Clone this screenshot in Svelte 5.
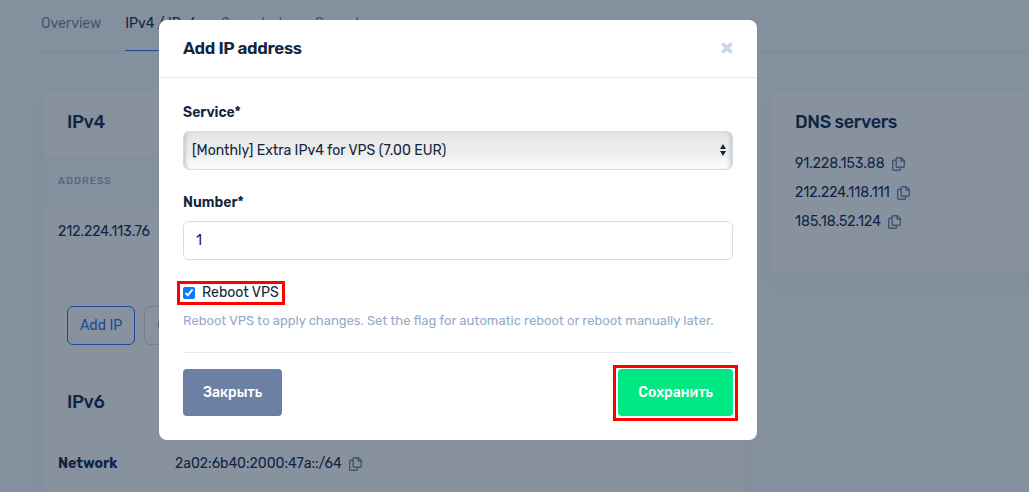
<script lang="ts">
  const servers = ['91.228.153.88', '212.224.118.111', '185.18.52.124'];
  let service = $state('extra');
  let count = $state('1');
  let reboot = $state(true);
</script>

{#snippet copyIcon()}
  <svg width="13" height="14" viewBox="0 0 13 14" fill="none" stroke="currentColor" stroke-width="1.4" stroke-linejoin="round">
    <path d="M5.3 .7H9.4L12.3 3.6V9.2a1.100 1.100 0 0 1-1.100 1.100H5.300a1.100 1.100 0 0 1-1.100-1.100V1.800A1.100 1.100 0 0 1 5.300 .7z" />
    <path d="M9 .9V4H12.100" />
    <path d="M4 3.200H1.800A1.100 1.100 0 0 0 .7 4.300v7.900a1.100 1.100 0 0 0 1.100 1.100h5.600a1.100 1.100 0 0 0 1.100-1.100v-1.700" />
  </svg>
{/snippet}

<div class="page">
  <nav class="tabs">
    <a href="#overview">Overview</a>
    <a href="#ip" class="active">IPv4 / IPv6</a>
    <a href="#snapshots">Snapshots</a>
    <a href="#console">Console</a>
  </nav>

  <div class="columns">
    <section class="card">
      <h2>IPv4</h2>
      <table>
        <thead><tr><th>Address</th></tr></thead>
        <tbody><tr><td>212.224.113.76</td></tr></tbody>
      </table>
      <div class="actions">
        <button class="outline primary">Add IP</button>
        <button class="outline">Order</button>
      </div>
      <h2 class="six">IPv6</h2>
      <dl>
        <dt>Network</dt>
        <dd>2a02:6b40:2000:47a::/64 <button class="copy" aria-label="Copy network">{@render copyIcon()}</button></dd>
      </dl>
    </section>

    <section class="card dns">
      <h2>DNS servers</h2>
      <ul>
        {#each servers as server}
          <li>{server} <button class="copy" aria-label="Copy {server}">{@render copyIcon()}</button></li>
        {/each}
      </ul>
    </section>
  </div>
</div>

<div class="overlay">
  <div class="modal" role="dialog" aria-modal="true" aria-labelledby="title">
    <header>
      <h1 id="title">Add IP address</h1>
      <button class="close" aria-label="Close">
        <svg width="12" height="12" viewBox="0 0 12 12" stroke="currentColor" stroke-width="3.600" stroke-linecap="round"><path d="M2.500 2.500l7 7M9.500 2.500l-7 7" /></svg>
      </button>
    </header>
    <form onsubmit={(e) => e.preventDefault()}>
      <label class="name" for="service">Service*</label>
      <div class="select">
        <select id="service" bind:value={service}>
          <option value="extra">[Monthly] Extra IPv4 for VPS (7.00 EUR)</option>
        </select>
        <svg width="6" height="12" viewBox="0 0 6 12" fill="currentColor"><path d="M3 0l3 5H0zM3 12l3-5H0z" /></svg>
      </div>

      <label class="name" for="count">Number*</label>
      <input id="count" class="text" type="text" bind:value={count} />

      <label class="check"><input type="checkbox" bind:checked={reboot} />Reboot VPS</label>
      <p>Reboot VPS to apply changes. Set the flag for automatic reboot or reboot manually later.</p>

      <footer>
        <button type="button" class="btn">Закрыть</button>
        <span class="mark"><button type="submit" class="btn save">Сохранить</button></span>
      </footer>
    </form>
  </div>
</div>

<style>
  :global(body) {
    background: #f9fbfd;
    overflow: hidden;
  }
  .page, .overlay {
    font: 14px/20px Rubik, Roboto, sans-serif;
    color: #12263f;
    box-sizing: border-box;
  }
  .page { color: #0c2448; }
  .page *, .overlay * { box-sizing: border-box; }
  button, input, select { font: inherit; color: inherit; margin: 0; }
  h1, h2, p, ul, dl, dd { margin: 0; padding: 0; }
  h1, h2 { letter-spacing: -0.02em; }
  button { cursor: pointer; }

  .page {
    height: 100vh;
    overflow: hidden;
    padding-left: 41px;
  }
  .tabs {
    display: flex;
    gap: 24px;
    border-bottom: 1px solid #e3ebf6;
  }
  .tabs a {
    padding: 14px 0 16px;
    border-bottom: 1px solid transparent;
    color: #6e84a3;
    text-decoration: none;
  }
  .tabs a.active { color: #12263f; border-color: #2070f5; }
  .columns {
    display: grid;
    grid-template-columns: 704fr 283fr;
    gap: 24px;
    align-items: start;
    padding-left: 1px;
    margin: 36px -24px 0 0;
  }
  .card {
    background: #fff;
    border: 1px solid #edf2f9;
    border-radius: 8px;
    box-shadow: 0 12px 24px rgba(18, 38, 63, 0.03);
    min-height: 440px;
  }
  h2 {
    font-size: 18px;
    line-height: 24px;
    font-weight: 500;
    padding: 21px 24px 22px;
  }
  .six { padding-bottom: 40px; }
  table { width: 100%; border-collapse: collapse; }
  th {
    background: #f9fbfd;
    border: solid #edf2f9;
    border-width: 1px 0;
    padding: 14px 15px 13px;
    text-align: left;
    font-size: 10px;
    font-weight: 500;
    letter-spacing: 1px;
    text-transform: uppercase;
    color: #95aac9;
  }
  td { padding: 17px 15px; }
  .actions {
    display: flex;
    gap: 9px;
    padding: 47px 24px 24px;
  }
  .outline {
    height: 39px;
    padding: 0 12px;
    background: none;
    border: 1px solid #d2ddec;
    border-radius: 6px;
    color: #6e84a3;
  }
  .primary { border-color: #2070f5; color: #2070f5; }
  dl { display: grid; grid-template-columns: 117px 1fr; padding: 0 15px; }
  dt { font-weight: 700; }
  dd, li { display: flex; align-items: center; gap: 7px; }
  .copy {
    display: flex;
    padding: 0;
    border: 0;
    background: none;
    color: #6e84a3;
  }
  .dns { min-height: 186px; }
  .dns h2 { padding-bottom: 20px; }
  ul { list-style: none; display: grid; gap: 9px; padding: 0 24px; }

  .overlay {
    position: fixed;
    inset: 0;
    padding: 20px 272px 0 159px;
    background: rgba(18, 38, 63, 0.5);
  }
  .modal { background: #fff; border-radius: 8px; }
  header {
    display: flex;
    justify-content: space-between;
    align-items: center;
    padding: 16px 24px 17px;
    border-bottom: 1px solid #e3ebf6;
  }
  h1 { font-size: 17px; line-height: 24px; font-weight: 600; }
  .close { display: flex; padding: 0; border: 0; background: none; color: #c8d4ea; }
  form { padding: 25px 24px 24px; }
  .name { display: block; font-weight: 600; margin-bottom: 8px; }
  .select { position: relative; margin-bottom: 23px; }
  select {
    display: block;
    width: 100%;
    height: 39px;
    padding: 0 8px;
    appearance: none;
    border: 1px solid #d2ddec;
    border-radius: 6px;
    background: linear-gradient(#e5e5e5, #eee 60%, #fff);
    box-shadow: inset 4px 0 4px -3px #bbb, inset -4px 0 4px -3px #bbb;
  }
  .select svg { position: absolute; right: 7px; top: 13px; pointer-events: none; }
  .text {
    display: block;
    width: 100%;
    height: 39px;
    padding: 0 12px;
    border: 1px solid #d2ddec;
    border-radius: 6px;
    background: #fff;
  }
  .check {
    display: flex;
    width: fit-content;
    align-items: center;
    gap: 7px;
    height: 24px;
    margin: 21px 0 0 -6px;
    padding: 0 3px;
    border: 3px solid #f00;
  }
  .check input { width: 12px; height: 12px; accent-color: #0a7aff; }
  p { font-size: 13px; margin: 6px 0 21px; color: #95aac9; }
  footer {
    display: flex;
    justify-content: space-between;
    padding-top: 16px;
    border-top: 1px solid #e3ebf6;
  }
  .btn {
    height: 47px;
    padding: 0 20px;
    border: 0;
    border-radius: 4px;
    background: #6b80a4;
    color: #fff;
    font-weight: 500;
  }
  .save { background: #00e884; }
  .mark { display: flex; margin: -4px -5px -5px; padding: 1px 2px 2px; border: 3px solid #f00; }
</style>
